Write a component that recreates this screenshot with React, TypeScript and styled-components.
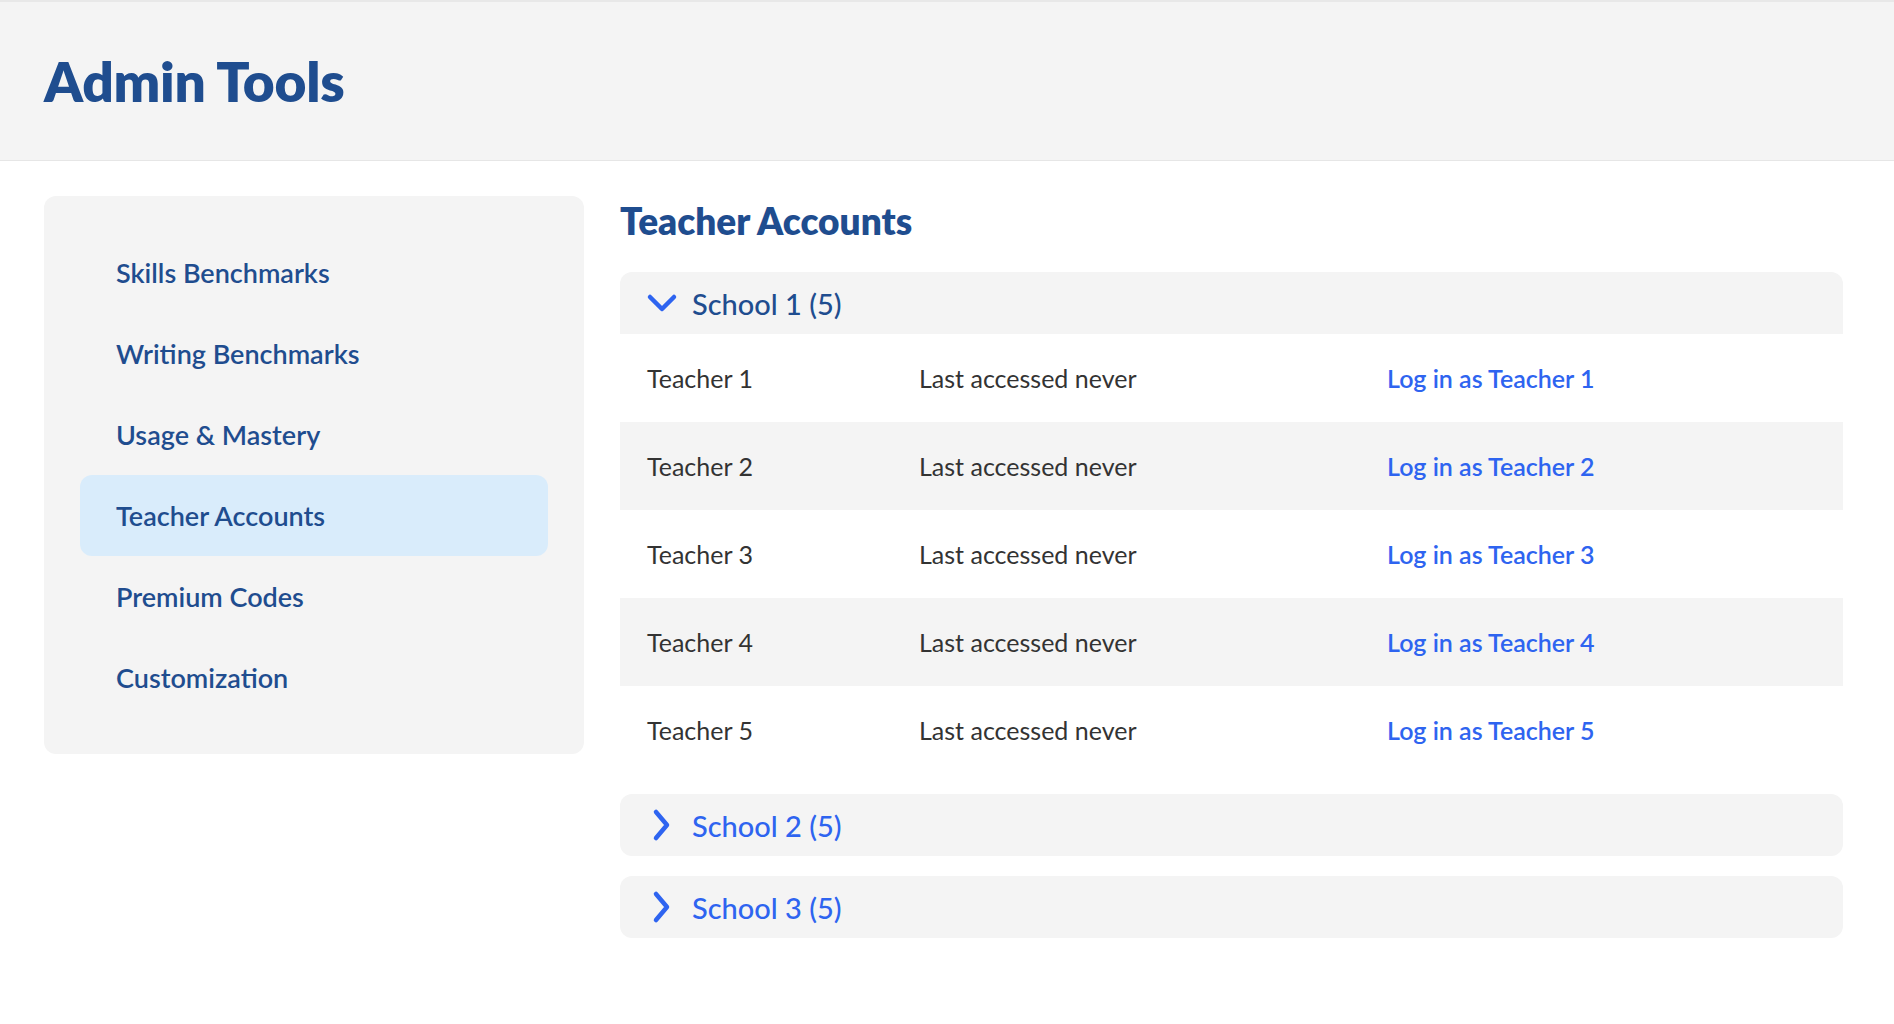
import React from "react";
import styled, { createGlobalStyle } from "styled-components";

const Global = createGlobalStyle`
  body { margin: 0; font-family: Lato, "Noto Sans", sans-serif; background: #fff; }
`;

const Header = styled.header`
  height: 158px;
  background: #f4f4f4;
  border-top: 2px solid #e8e8e8;
  border-bottom: 1px solid #e6e6e6;
  display: flex;
  align-items: center;
  padding-left: 44px;
`;
const Title = styled.h1`
  margin: 0;
  font-size: 55px;
  font-weight: 800;
  color: #1f4d8f;
  letter-spacing: -0.3px;
`;
const Body = styled.div`
  display: flex;
  gap: 36px;
  padding: 35px 51px 0 44px;
  align-items: flex-start;
`;
const Sidebar = styled.nav`
  width: 540px;
  background: #f4f4f4;
  border-radius: 12px;
  padding: 36px 36px;
  box-sizing: border-box;
  display: flex;
  flex-direction: column;
`;
const NavItem = styled.div<{ $active?: boolean }>`
  height: 81px;
  display: flex;
  align-items: center;
  padding-left: 36px;
  border-radius: 12px;
  font-size: 27px;
  font-weight: 600;
  color: #1f4d8f;
  background: ${(p) => (p.$active ? "#d9ecfb" : "transparent")};
`;
const Main = styled.main`
  flex: 1;
  display: flex;
  flex-direction: column;
`;
const SectionTitle = styled.h2`
  margin: 0 0 28px;
  height: 48px;
  display: flex;
  align-items: center;
  font-size: 37px;
  font-weight: 800;
  color: #1f4d8f;
`;
const Group = styled.div`
  display: flex;
  flex-direction: column;
  margin-bottom: 20px;
`;
const GroupHead = styled.div<{ $open?: boolean }>`
  height: 62px;
  background: #f4f4f4;
  border-radius: ${(p) => (p.$open ? "12px 12px 0 0" : "12px")};
  display: flex;
  align-items: center;
  gap: 14px;
  padding-left: 26px;
  font-size: 29px;
  font-weight: 500;
  color: ${(p) => (p.$open ? "#1f4d8f" : "#2e64f0")};
`;
const Row = styled.div<{ $alt?: boolean }>`
  height: 88px;
  display: grid;
  grid-template-columns: 272px 468px 1fr;
  align-items: center;
  padding-left: 27px;
  background: ${(p) => (p.$alt ? "#f4f4f4" : "#fff")};
  font-size: 25px;
  color: #333;
`;
const Link = styled.span`
  color: #2e64f0;
  font-weight: 600;
`;

const Chev = ({ down }: { down?: boolean }) =>
  down ? (
    <svg width="32" height="22" viewBox="0 0 32 22">
      <path d="M4 5 L16 17 L28 5" fill="none" stroke="#2e64f0" strokeWidth="4.5" strokeLinecap="round" strokeLinejoin="round" />
    </svg>
  ) : (
    <svg width="32" height="34" viewBox="0 0 32 34">
      <path d="M10 4 L21 17 L10 30" fill="none" stroke="#2e64f0" strokeWidth="4.5" strokeLinecap="round" strokeLinejoin="round" />
    </svg>
  );

const nav = ["Skills Benchmarks", "Writing Benchmarks", "Usage & Mastery", "Teacher Accounts", "Premium Codes", "Customization"];

export default function App() {
  return (
    <>
      <Global />
      <Header>
        <Title>Admin Tools</Title>
      </Header>
      <Body>
        <Sidebar>
          {nav.map((n) => (
            <NavItem key={n} $active={n === "Teacher Accounts"}>{n}</NavItem>
          ))}
        </Sidebar>
        <Main>
          <SectionTitle>Teacher Accounts</SectionTitle>
          <Group>
            <GroupHead $open>
              <Chev down />
              School 1 (5)
            </GroupHead>
            {[1, 2, 3, 4, 5].map((i) => (
              <Row key={i} $alt={i % 2 === 0}>
                <span>Teacher {i}</span>
                <span>Last accessed never</span>
                <Link>Log in as Teacher {i}</Link>
              </Row>
            ))}
          </Group>
          <Group>
            <GroupHead>
              <Chev />
              School 2 (5)
            </GroupHead>
          </Group>
          <Group>
            <GroupHead>
              <Chev />
              School 3 (5)
            </GroupHead>
          </Group>
        </Main>
      </Body>
    </>
  );
}
